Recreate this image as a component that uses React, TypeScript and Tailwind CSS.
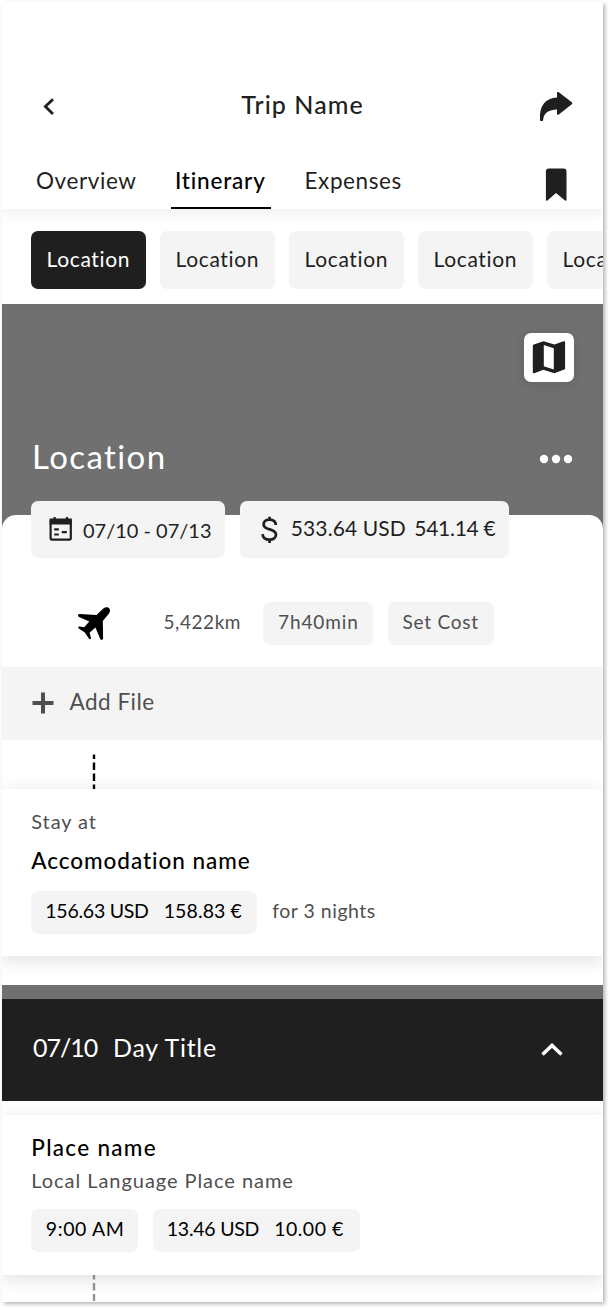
import React from "react";

const chip = "flex shrink-0 rounded-[7px] bg-[#f4f4f4] whitespace-nowrap";

function BackIcon() {
  return (
    <svg className="h-[20px] w-[14px]" viewBox="41 97 14 20" fill="none" stroke="#1f1f1f" strokeWidth="2.8">
      <path d="M53 99.2 45.4 106.6 53 114" />
    </svg>
  );
}

function ShareIcon() {
  return (
    <svg className="h-[32px] w-[34px]" viewBox="539 91 34 32" fill="#1f1f1f">
      <path d="M557 93c0-1 1-1.4 1.8-.7l13 10c.7.6.7 1.3 0 1.9l-13 10.3c-.8.7-1.8.3-1.8-.7v-4.4c-8 .1-13.2 3.1-13.9 10.5-.1 1.6-3 1.6-3.1 0C539.200 106.500 544.500 98.200 557 97.500Z" />
    </svg>
  );
}

function BookmarkIcon() {
  return (
    <svg className="h-[34px] w-[22px]" viewBox="545 168 22 34" fill="#1f1f1f">
      <path d="M549 168.500h14.500a3 3 0 0 1 3 3v28.200c0 1-.8 1.300-1.500.7L556 193l-8.600 7.400c-.7.6-1.500.3-1.500-.7v-28.200a3 3 0 0 1 3.100-3Z" />
    </svg>
  );
}

function MapIcon() {
  return (
    <svg className="h-[34px] w-[34px]" viewBox="532 340 34 34" fill="#1f1f1f" fillRule="evenodd">
      <path d="m533.800 344.600 9.700-3.300 10.900 3.300 9.200-3.300c.9-.3 1.500 0 1.500.9v26.200c0 .6-.3 1-.9 1.200l-9.800 3.600-11-3.500-9.200 3.500c-.9.300-1.400 0-1.400-.8v-26.500c0-.6.300-1 1-1.300ZM543.800 345v21.300l10 3.200v-21.200Z" />
    </svg>
  );
}

function CalendarIcon() {
  return (
    <svg className="h-[26px] w-[24px]" viewBox="49 516 24 26" fill="none" stroke="#1f1f1f">
      <rect x="50.600" y="520" width="20.200" height="19.600" rx="1.500" strokeWidth="2.200" />
      <path d="M49.600 522.500h22.200M49.600 520.500h22.200" strokeWidth="4" />
      <path d="M54.600 517v4M67 517v4" strokeWidth="2.200" />
      <path d="M54.200 529.300h4.600M54.200 534.500h4.600M61.800 532.200h5" strokeWidth="2.200" />
    </svg>
  );
}

function DollarIcon() {
  return (
    <svg className="h-[28px] w-[18px]" viewBox="260 516 18 28" fill="none" stroke="#1f1f1f" strokeWidth="2.700">
      <path d="M275.800 525c-.2-3.500-2.700-5.300-6.200-5.300-3.400 0-6 1.700-6 4.700 0 6.500 12.400 3.400 12.400 10.200 0 3.300-2.800 5.100-6.400 5.100-3.900 0-6.800-1.700-7-5.600M269.600 516.800v3.500M269.600 539v4" />
    </svg>
  );
}

function PlaneIcon() {
  return (
    <svg className="h-[34px] w-[34px]" viewBox="77 607 34 34" fill="#000">
      <path d="M109.300 608.500c1.100 1.300.9 3.300-.3 5l-6.200 7.600.3 17.200c0 1.600-2 2.200-2.800.7l-4.900-11.500-5.800 5.200 1.300 5c.2 1.500-1.100 2-1.900 1l-4.200-6.100-6-4.100c-1-.8-.5-2.100 1-1.900l4.400.7 5.100-5.800-10.300-4.500c-1.600-.8-1.200-2.900.6-2.900l16.900 1 6.800-6.600c2-1.700 4.700-1.800 6 0Z" />
    </svg>
  );
}

function Dashes({ color, height, d }: { color: string; height: number; d: string }) {
  return (
    <svg className="ml-[90px] block w-[4px]" style={{ height }} viewBox={`0 0 4 ${height}`} fill="none" stroke={color} strokeWidth="2.4">
      <path d={d} />
    </svg>
  );
}

export default function App() {
  return (
    <div className="h-[1310px] w-[610px] overflow-hidden bg-white pt-[2px] pl-[2px] font-['Lato',sans-serif] text-[#1f1f1f]">
      <div className="flex h-[1300px] w-[600.500px] flex-col overflow-hidden bg-white shadow-[2px_2px_4px_0px_rgba(0,0,0,0.3)]">
        <header className="relative z-10 h-[207.200px] shrink-0 bg-white shadow-[0_3px_14px_rgba(0,0,0,0.08)]">
          <div className="flex h-[142px] items-start justify-between pt-[88px] pr-[29.500px] pl-[39px]">
            <span className="pt-[7px]"><BackIcon /></span>
            <h1 className="ml-[11px] text-[25px] leading-[28px] font-medium tracking-[1.050px]">Trip Name</h1>
            <span className="pt-[1px]"><ShareIcon /></span>
          </div>
          <nav className="flex h-[65.200px] items-start pl-[34px] text-[22.500px] leading-[28px] tracking-[0.600px]">
            <span className="w-[135px] pt-[22.500px]">Overview</span>
            <span className="flex h-full w-[99.500px] flex-col justify-between border-b-2 border-black pt-[22.500px] pl-[4px] font-medium tracking-[0.800px] text-black">Itinerary</span>
            <span className="ml-[34px] pt-[22.500px]">Expenses</span>
            <span className="mr-[35.500px] ml-auto pt-[24px]"><BookmarkIcon /></span>
          </nav>
        </header>

        <div className="flex h-[94.500px] shrink-0 gap-[14.500px] overflow-hidden pt-[22px] pl-[29.300px] text-[21px] leading-[28px] tracking-[0.650px]">
          {[0, 1, 2, 3, 4].map((i) => (
            <div key={i} className={`h-[58px] w-[114.500px] shrink-0 rounded-[7px] pt-[13.500px] pl-[15.200px] ${i === 0 ? "bg-[#1f1f1f] text-white" : "bg-[#f4f4f4]"}`}>Location</div>
          ))}
        </div>

        <section className="h-[226px] shrink-0 bg-[#707070] pt-[29px] text-white">
          <div className="ml-[522px] flex h-[49.500px] w-[50px] items-center justify-center rounded-[7px] bg-white shadow-[0_2px_12px_rgba(0,0,0,0.12)]"><MapIcon /></div>
          <div className="flex items-start justify-between pt-[54px] pr-[30px] pl-[30px]">
            <h2 className="text-[33px] leading-[40px] tracking-[1.400px]">Location</h2>
            <svg className="mt-[18px] h-[10px] w-[34px]" viewBox="0 0 34 10" fill="#fff"><circle cx="5" cy="5" r="4.200" /><circle cx="17" cy="5" r="4.200" /><circle cx="29" cy="5" r="4.200" /></svg>
          </div>
        </section>

        <section className="-mt-[14.500px] h-[152px] shrink-0 rounded-t-[14px] bg-white">
          <div className="-mt-[14.500px] flex gap-[14.500px] pl-[29.300px]">
            <div className={`${chip} h-[57.500px] w-[194px] pt-[15px] pl-[17.700px]`}>
              <CalendarIcon />
              <span className="ml-[10px] text-[20px] leading-[28px]">07/10 - 07/13</span>
            </div>
            <div className={`${chip} h-[57.500px] w-[269.500px] pt-[15px] pl-[20px]`}>
              <DollarIcon />
              <span className="-mt-[2px] ml-[13px] text-[21px] leading-[28px] tracking-[0.100px]">533.64 USD</span>
              <span className="-mt-[2px] ml-[8.500px] text-[21px] leading-[28px] tracking-[-0.300px]">541.14 €</span>
            </div>
          </div>
          <div className="flex pt-[44px] pl-[75px] text-[19px] leading-[26px] tracking-[0.550px] text-[#4f4f4f]">
            <span className="pt-[5px]"><PlaneIcon /></span>
            <span className="ml-[52.500px] w-[99.800px] pt-[7px]">5,422km</span>
            <span className={`${chip} h-[43px] w-[110px] pt-[7px] pl-[14.700px] tracking-[0.900px]`}>7h40min</span>
            <span className={`${chip} ml-[14.500px] h-[43px] w-[106px] pt-[7px] pl-[14.700px] tracking-[0.750px]`}>Set Cost</span>
          </div>
        </section>

        <div className="flex h-[72.500px] shrink-0 items-start bg-[#f4f4f4] pl-[30px] text-[22.500px] leading-[28px] tracking-[0.500px] text-[#4f4f4f]">
          <svg className="mt-[25px] h-[22px] w-[22px]" viewBox="0 0 22 22" fill="none" stroke="#4f4f4f" strokeWidth="4" strokeLinejoin="round"><path d="M.5 11h21M11 .5v21" /></svg>
          <span className="ml-[15.500px] pt-[20.500px]">Add File</span>
        </div>

        <div className="h-[49px] shrink-0 pt-[14px]">
          <Dashes color="#000" height={35} d="M2 .5V5M2 8.500V16M2 19.500V27M2 30.500V35" />
        </div>

        <section className="h-[167px] shrink-0 bg-white pt-[19.500px] pl-[29.300px] shadow-[0_4px_18px_rgba(0,0,0,0.13)]">
          <p className="text-[20px] leading-[26px] tracking-[0.900px] text-[#4f4f4f]">Stay at</p>
          <h3 className="mt-[12.500px] text-[22.500px] leading-[28px] font-medium tracking-[0.950px] text-black">Accomodation name</h3>
          <div className="mt-[16px] flex text-[19.500px] leading-[26px]">
            <div className={`${chip} h-[43px] w-[226px] gap-[15px] pt-[7px] pl-[14px] text-black`}><span className="tracking-[-0.250px]">156.63 USD</span><span className="tracking-[0.100px]">158.83 €</span></div>
            <span className="ml-[15px] pt-[7px] tracking-[0.500px] text-[#4f4f4f]">for 3 nights</span>
          </div>
        </section>

        <div className="relative z-10 mt-[29px] h-[14.500px] shrink-0 bg-[#707070]" />
        <section className="relative z-10 flex h-[101.500px] shrink-0 items-start bg-[#1f1f1f] pt-[33px] pr-[39px] pl-[31px] text-[25px] leading-[30px] text-white">
          <span className="w-[80px] tracking-[-1px]">07/10</span><span className="tracking-[0.700px]">Day Title</span>
          <svg className="mt-[10px] ml-auto h-[16px] w-[24px]" viewBox="0 0 24 16" fill="none" stroke="#fff" strokeWidth="3.500"><path d="m2.500 12.500 9.500-9 9.500 9" /></svg>
        </section>

        <section className="mt-[14px] h-[160px] shrink-0 bg-white pt-[19px] pl-[29.300px] shadow-[0_4px_18px_rgba(0,0,0,0.13)]">
          <h3 className="text-[22.500px] leading-[28px] font-medium tracking-[1.300px] text-black">Place name</h3>
          <p className="mt-[5.500px] text-[20px] leading-[26px] tracking-[0.950px] text-[#4f4f4f]">Local Language Place name</p>
          <div className="mt-[16px] flex gap-[14.500px] text-[19.500px] leading-[26px] text-black">
            <div className={`${chip} h-[43px] w-[107px] pt-[7px] pl-[14.500px] tracking-[0.600px]`}>9:00 AM</div>
            <div className={`${chip} h-[43px] w-[207px] gap-[15px] pt-[7px] pl-[14px]`}><span className="tracking-[-0.250px]">13.46 USD</span><span className="tracking-[0.500px]">10.00 €</span></div>
          </div>
        </section>
        <div className="relative"><Dashes color="#909090" height={27} d="M2 0V4.500M2 8V15.500M2 19V26" /></div>
      </div>
    </div>
  );
}
